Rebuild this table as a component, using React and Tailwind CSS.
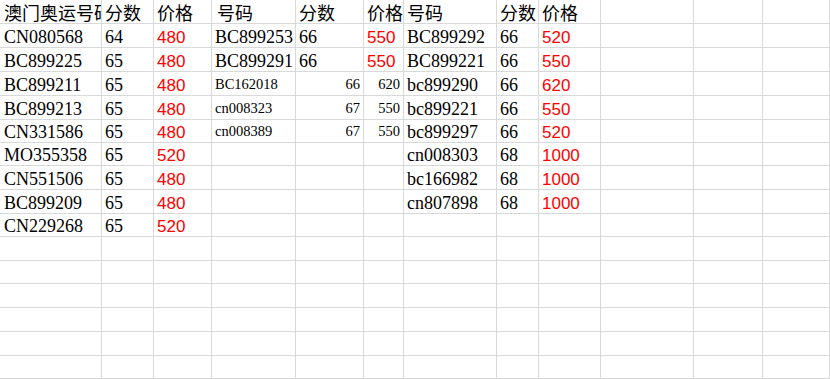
import React from "react";

const H = (t) => ({ t, k: "h" });
const C = (t) => ({ t, k: "c" });
const N = (t) => ({ t, k: "n" });
const R = (t) => ({ t, k: "r" });
const S = (t) => ({ t, k: "s" });
const SR = (t) => ({ t, k: "sr" });
const E = { t: "", k: "e" };

const rows = [
  [{ t: "澳门奥运号码", k: "h0" }, H("分数"), H("价格"), { t: "号码", k: "h2" }, H("分数"), H("价格"), H("号码"), H("分数"), H("价格")],
  [{ t: "CN080568", k: "c0" }, N("64"), R("480"), C("BC899253"), N("66"), R("550"), C("BC899292"), N("66"), R("520")],
  [{ t: "BC899225", k: "c0" }, N("65"), R("480"), C("BC899291"), N("66"), R("550"), C("BC899221"), N("66"), R("550")],
  [{ t: "BC899211", k: "c0" }, N("65"), R("480"), S("BC162018"), SR("66"), SR("620"), C("bc899290"), N("66"), R("620")],
  [{ t: "BC899213", k: "c0" }, N("65"), R("480"), S("cn008323"), SR("67"), SR("550"), C("bc899221"), N("66"), R("550")],
  [{ t: "CN331586", k: "c0" }, N("65"), R("480"), S("cn008389"), SR("67"), SR("550"), C("bc899297"), N("66"), R("520")],
  [{ t: "MO355358", k: "c0" }, N("65"), R("520"), E, E, E, C("cn008303"), N("68"), R("1000")],
  [{ t: "CN551506", k: "c0" }, N("65"), R("480"), E, E, E, C("bc166982"), N("68"), R("1000")],
  [{ t: "BC899209", k: "c0" }, N("65"), R("480"), E, E, E, C("cn807898"), N("68"), R("1000")],
  [{ t: "CN229268", k: "c0" }, N("65"), R("520")],
];

const NROWS = 16;
const NCOLS = 12;

function cellClass(k) {
  switch (k) {
    case "h0":
      return "items-end pl-[4px] pb-[2px] text-[18px] font-['Noto_Sans_CJK_SC',sans-serif] text-black";
    case "h":
      return "items-end pl-[3px] pb-[2px] text-[18px] font-['Noto_Sans_CJK_SC',sans-serif] text-black";
    case "h2":
      return "items-end pl-[5px] pb-[2px] text-[18px] font-['Noto_Sans_CJK_SC',sans-serif] text-black";
    case "c0":
      return "items-end pl-[4px] pb-px text-[18px] font-['Liberation_Serif',serif] text-black";
    case "c":
    case "n":
      return "items-end pl-[3px] pb-px text-[18px] font-['Liberation_Serif',serif] text-black";
    case "r":
      return "items-end pl-[3px] pb-px text-[17px] font-['Liberation_Sans',Arial,sans-serif] text-[#ff0000]";
    case "s":
      return "items-end pl-[3px] pb-[4px] text-[14.5px] font-['Liberation_Serif',serif] text-black";
    case "sr":
      return "items-end justify-end pr-[3px] pb-[4px] text-[14.5px] font-['Liberation_Serif',serif] text-black";
    default:
      return "";
  }
}

export default function App() {
  const cells = [];
  for (let r = 0; r < NROWS; r++) {
    for (let c = 0; c < NCOLS; c++) {
      const cell = (rows[r] && rows[r][c]) || E;
      cells.push(
        <div
          key={`${r}-${c}`}
          className={`flex overflow-hidden whitespace-nowrap leading-none border-r border-b border-[#d9d9d9] ${cellClass(cell.k)}`}
        >
          {cell.t}
        </div>
      );
    }
  }
  return (
    <div className="w-[830px] h-[379px] bg-white overflow-hidden">
      <div className="grid grid-cols-[102px_52px_58px_84px_68px_40px_93px_42px_62px_93px_69px_67px] grid-rows-[24px_24px_24px_24px_24px_23px_23px_24px_24px_23px_24px_23px_24px_24px_24px_23px]">
        {cells}
      </div>
    </div>
  );
}
